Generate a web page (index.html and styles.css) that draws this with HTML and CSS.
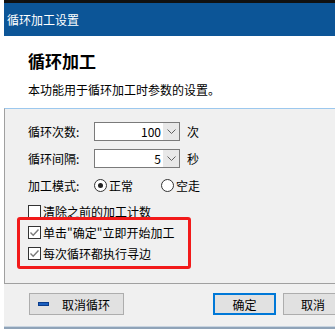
FILE: index.html
```html
<!DOCTYPE html>
<html lang="zh-CN">
<head>
  <meta charset="UTF-8">
  <title>循环加工设置</title>
  <link rel="stylesheet" href="styles.css">
</head>
<body>
  <div class="window">
    <div class="topline"></div>
    <div class="titlebar">循环加工设置</div>
    <div class="header">
      <h1>循环加工</h1>
      <p>本功能用于循环加工时参数的设置。</p>
    </div>

    <div class="group">
      <div class="row">
        <span class="label">循环次数:</span>
        <div class="combo"><span class="value">100</span><span class="drop"><svg width="9" height="5" viewBox="0 0 9 5"><path d="M0.5 0.5 L4.5 4.5 L8.5 0.5" fill="none" stroke="#606060"/></svg></span></div>
        <span class="unit">次</span>
      </div>
      <div class="row">
        <span class="label">循环间隔:</span>
        <div class="combo"><span class="value">5</span><span class="drop"><svg width="9" height="5" viewBox="0 0 9 5"><path d="M0.5 0.5 L4.5 4.5 L8.5 0.5" fill="none" stroke="#606060"/></svg></span></div>
        <span class="unit">秒</span>
      </div>
      <div class="row radios">
        <span class="label">加工模式:</span>
        <span class="radio checked"><i></i>正常</span>
        <span class="radio"><i></i>空走</span>
      </div>

      <div class="checks">
        <div class="check"><span class="box"></span>清除之前的加工计数</div>
        <div class="check"><span class="box"><svg width="11" height="11" viewBox="0 0 11 11"><path d="M1.5 5.5 L4.2 8.2 L9.5 2.5" fill="none" stroke="#7a7a7a" stroke-width="1.4"/></svg></span>单击"确定"立即开始加工</div>
        <div class="check"><span class="box"><svg width="11" height="11" viewBox="0 0 11 11"><path d="M1.5 5.5 L4.2 8.2 L9.5 2.5" fill="none" stroke="#7a7a7a" stroke-width="1.4"/></svg></span>每次循环都执行寻边</div>
      </div>

      <div class="highlight"></div>
    </div>

    <div class="footer">
      <button class="btn stop"><span class="minus"></span>取消循环</button>
      <div class="spacer"></div>
      <button class="btn ok">确定</button>
      <button class="btn cancel">取消</button>
    </div>
    <div class="bottomline"></div>
  </div>
</body>
</html>
```

FILE: styles.css
```css
body { margin: 0; background: #fff; font-family: "Noto Sans CJK SC", "Microsoft YaHei", sans-serif; font-size: 12px; color: #000; overflow: hidden; }
.window { margin-left: 4px; width: 331px; }
.topline { height: 3px; background: #111; }
.titlebar { height: 33px; background: #0c5597; color: #fff; font-size: 12px; line-height: 34px; padding-left: 3px; }
.header { height: 72px; background: #fff; padding-left: 24px; box-sizing: border-box; padding-top: 12px; }
.header h1 { margin: 0; font-size: 17px; font-weight: bold; line-height: 26px; }
.header p { margin: 8px 0 0; font-size: 12px; line-height: 16px; }

.group { position: relative; height: 176px; box-sizing: border-box; background: #f0f0f0; border-top: 1px solid #9cc8ee; border-left: 1px solid #a0a0a0; border-bottom: 1px solid #a0a0a0; padding: 13px 0 0 23px; }
.row { display: flex; align-items: center; height: 19px; margin-bottom: 8px; }
.label { width: 66px; }
.combo { display: flex; width: 86px; height: 19px; box-sizing: border-box; border: 1px solid #7a7a7a; background: #fff; }
.combo .value { flex: 1; text-align: right; line-height: 17px; padding-right: 2px; }
.combo .drop { width: 16px; background: #e8e8e8; display: flex; align-items: center; justify-content: center; }
.unit { margin-left: 7px; }

.radios { margin-top: 2px; margin-bottom: 9px; }
.radio { display: flex; align-items: center; margin-right: 28px; }
.radio i { width: 11px; height: 11px; border: 1px solid #333; border-radius: 50%; background: #fff; margin-right: 2px; position: relative; }
.radio.checked i::after { content: ""; position: absolute; left: 3px; top: 3px; width: 5px; height: 5px; border-radius: 50%; background: #222; }

.checks { display: flex; flex-direction: column; gap: 7px; }
.check { display: flex; align-items: center; height: 14px; }
.box { width: 11px; height: 11px; border: 1px solid #333; background: #fff; margin-right: 2px; display: flex; }

.highlight { position: absolute; left: 12px; top: 108px; width: 174px; height: 52px; box-sizing: border-box; border: 3px solid #f21a1a; border-radius: 3px; }

.footer { display: flex; height: 42px; box-sizing: border-box; padding: 9px 0 0 25px; background: #f0f0f0; }
.btn { height: 22px; box-sizing: border-box; background: #e1e1e1; border: 1px solid #adadad; font-family: inherit; font-size: 12px; padding: 0; }
.stop { width: 95px; display: flex; align-items: center; padding-left: 8px; }
.minus { width: 11px; height: 4px; background: #1a5fbf; border: 1px solid #0a3c8c; margin-right: 13px; box-sizing: border-box; }
.spacer { flex: 1; }
.ok { width: 63px; border: 2px solid #0078d7; margin-right: 7px; }
.cancel { width: 60px; margin-right: -8px; }
.bottomline { height: 2px; background: #8fa3b8; border-top: 1px solid #c8d4e0; }
```
